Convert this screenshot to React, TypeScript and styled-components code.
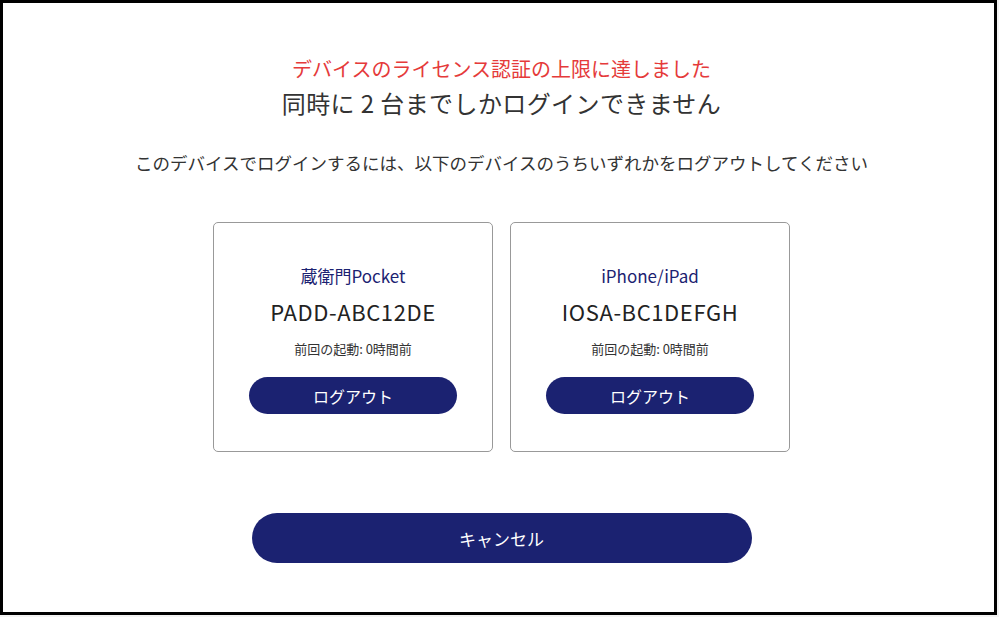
import React from "react";
import styled, { createGlobalStyle } from "styled-components";

const GlobalStyle = createGlobalStyle`
  html, body {
    margin: 0;
    padding: 0;
    background: #f3f3f3;
  }
  body {
    font-family: "Noto Sans CJK JP", "Noto Sans", sans-serif;
    color: #333;
  }
`;

const navy = "#1b2271";

const Frame = styled.div`
  box-sizing: border-box;
  width: 997px;
  height: 615px;
  border: 3px solid #000;
  background: #fff;
  display: flex;
  flex-direction: column;
  align-items: center;
  padding: 52px 0 0 6px;
`;

const Alert = styled.div`
  color: #e53a3a;
  font-size: 20px;
  line-height: 28px;
`;

const Heading = styled.h1`
  margin: 4px 0 0;
  font-size: 24px;
  font-weight: 400;
  line-height: 32px;
  letter-spacing: 0.4px;
  color: #333;
`;

const Instruction = styled.p`
  margin: 32px 0 0;
  font-size: 17.5px;
  line-height: 24px;
  color: #333;
`;

const CardRow = styled.div`
  display: flex;
  gap: 17px;
  margin-top: 47px;
`;

const Card = styled.div`
  box-sizing: border-box;
  width: 280px;
  height: 230px;
  border: 1px solid #999;
  border-radius: 5px;
  display: flex;
  flex-direction: column;
  align-items: center;
  padding-top: 41px;
`;

const DeviceName = styled.div`
  color: ${navy};
  font-size: 17px;
  line-height: 24px;
`;

const DeviceCode = styled.div`
  margin-top: 9px;
  font-size: 22px;
  line-height: 28px;
  color: #222;
  letter-spacing: 0.6px;
`;

const LastLaunch = styled.div`
  margin-top: 15px;
  font-size: 13px;
  line-height: 18px;
  color: #333;
`;

const PillButton = styled.button<{ $wide?: boolean }>`
  box-sizing: border-box;
  border: none;
  background: ${navy};
  color: #fff;
  font-family: inherit;
  cursor: pointer;
  width: ${(p) => (p.$wide ? "500px" : "208px")};
  height: ${(p) => (p.$wide ? "50px" : "37px")};
  border-radius: 25px;
  font-size: ${(p) => (p.$wide ? "17px" : "16px")};
  margin-top: ${(p) => (p.$wide ? "61px" : "19px")};
`;

const devices = [
  { name: "蔵衛門Pocket", code: "PADD-ABC12DE", last: "前回の起動: 0時間前" },
  { name: "iPhone/iPad", code: "IOSA-BC1DEFGH", last: "前回の起動: 0時間前" },
];

export default function App() {
  return (
    <>
      <GlobalStyle />
      <Frame>
        <Alert>デバイスのライセンス認証の上限に達しました</Alert>
        <Heading>同時に 2 台までしかログインできません</Heading>
        <Instruction>
          このデバイスでログインするには、以下のデバイスのうちいずれかをログアウトしてください
        </Instruction>
        <CardRow>
          {devices.map((d) => (
            <Card key={d.code}>
              <DeviceName>{d.name}</DeviceName>
              <DeviceCode>{d.code}</DeviceCode>
              <LastLaunch>{d.last}</LastLaunch>
              <PillButton>ログアウト</PillButton>
            </Card>
          ))}
        </CardRow>
        <PillButton $wide>キャンセル</PillButton>
      </Frame>
    </>
  );
}
